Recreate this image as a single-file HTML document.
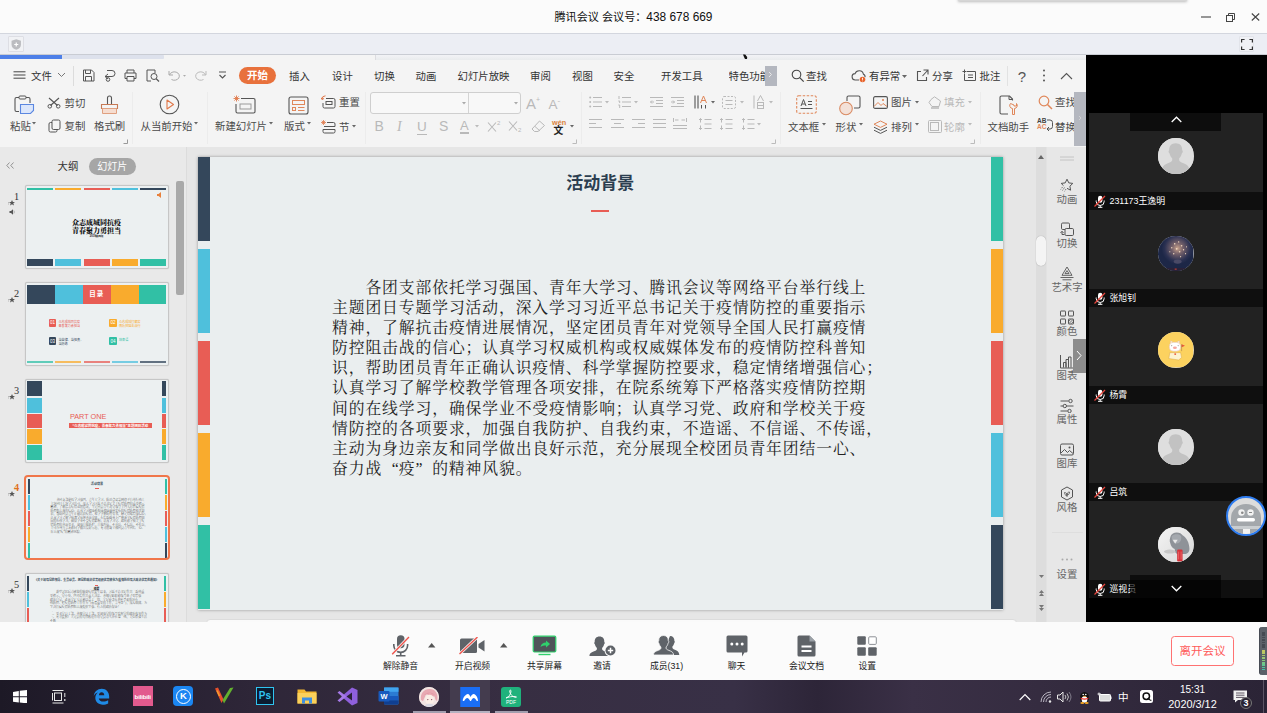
<!DOCTYPE html>
<html lang="zh-CN">
<head>
<meta charset="utf-8">
<title>腾讯会议</title>
<style>
*{box-sizing:border-box;margin:0;padding:0}
html,body{width:1267px;height:713px;overflow:hidden;background:#fafafa;font-family:"Liberation Sans","Noto Sans CJK SC",sans-serif;}
.abs{position:absolute}
#root{position:relative;width:1267px;height:713px;overflow:hidden}
#titlebar{left:0;top:0;width:1267px;height:33px;background:#fbfbfb}
#title{left:0;width:1267px;top:7.400px;text-align:center;color:#111;line-height:17px;white-space:nowrap}
#strip{left:0;top:33px;width:1267px;height:22px;background:#eceef4;border-top:1px solid #d3d6de}
#share{left:0;top:54px;width:1085.700px;height:568px;background:#f4f4f4;overflow:hidden}
#side{left:1085.700px;top:54px;width:181.300px;height:568px;background:#000}
.tile{left:3.500px;width:173.500px;height:97px;background:#222}
.tile .nb{position:absolute;left:0;bottom:0;width:173.500px;height:18.500px;background:#0f0f0f;color:#fff;font-size:8.900px;line-height:19.500px;padding-left:20.300px;white-space:nowrap}
.tile .av{position:absolute;left:69.200px;top:24.800px;margin-top:.8px;width:35.400px;height:35.400px;border-radius:50%;background:#d8d8d8;overflow:hidden}.tile .av svg{width:35.400px;height:35.400px}
#bottom{left:0;top:622px;width:1267px;height:58px;background:#fbfbfb}
#taskbar{left:0;top:680px;width:1267px;height:33px;overflow:hidden;background:linear-gradient(90deg,#1d1926 0%,#241e2e 8%,#2e2638 20%,#372e42 40%,#383046 58%,#2d2538 64.500%,#3a3046 72%,#352c40 82%,#2b2436 100%)}
/* WPS */
#menurow{left:0;top:4px;width:1086px;height:32px}
.mi{position:absolute;top:10.500px;font-size:10.4px;color:#333;line-height:16px;white-space:nowrap}
.rl{position:absolute;font-size:10.4px;color:#4a4a4a;line-height:16px;white-space:nowrap}
#leftpanel{left:0;top:93px;width:186px;height:475px;background:#e9e9e9;overflow:hidden}
#canvas{left:186px;top:93px;width:864px;height:475px;background:#e6e6e6;border-left:1px solid #dcdcdc}
#slide{left:197.500px;top:103px;width:805.500px;height:452.600px;background:#eaeeef;box-shadow:0 0 3px rgba(0,0,0,.35)}
.bar{position:absolute;width:12.500px;height:84.400px}
#body{left:134.500px;top:120.700px;font-family:"Liberation Serif","Noto Serif CJK SC",serif;font-size:15.800px;letter-spacing:.900px;line-height:20.150px;color:#222;white-space:nowrap}
#stitle{left:0;width:805.500px;top:14.600px;text-align:center;font-weight:bold;font-size:17px;color:#2c3e50;line-height:24px}
#rside{left:1050px;top:93px;width:36px;height:475px;background:#e7e7e7;box-shadow:-3.500px 0 0 #e7e7e7}
.rs{position:absolute;left:-2px;width:38px;text-align:center;font-size:10.400px;color:#666;line-height:14px;white-space:nowrap}
.bt{position:absolute;top:37px;font-size:8.800px;color:#1a1a1a;line-height:14px;text-align:center;width:80px;white-space:nowrap}
</style>
</head>
<body>
<div id="root">
<div id="titlebar" class="abs"><div id="title" class="abs"><span style="font-size:11.100px">腾讯会议 会议号：</span><span style="font-size:11.900px">438 678 669</span></div>
<div class="abs" style="left:959px;top:-4px;width:227px;height:5px;background:#d6d6d6;box-shadow:0 0 3px 1px rgba(0,0,0,.25)"></div>
<svg class="abs" style="left:1201px;top:16px" width="10" height="2" viewBox="0 0 10 2"><path d="M0 1h10" stroke="#444" stroke-width="1.100"/></svg>
<svg class="abs" style="left:1226px;top:12.500px" width="9" height="9" viewBox="0 0 9 9"><rect x="0.500" y="2.500" width="6" height="6" stroke="#444" fill="none"/><path d="M2.500 2.500v-2h6v6h-2" stroke="#444" fill="none"/></svg>
<svg class="abs" style="left:1250.500px;top:13px" width="9" height="8" viewBox="0 0 9 8"><path d="M0.800 0.500l7.400 7M8.200 0.500l-7.400 7" stroke="#444" stroke-width="1.100"/></svg>
</div>
<div id="strip" class="abs">
<div class="abs" style="left:8.200px;top:2px;width:16px;height:16px;border:1px solid #dddee4;background:#f1f2f5;border-radius:1px"></div>
<svg class="abs" style="left:11px;top:5px" width="10.500" height="11" viewBox="0 0 10 11"><path d="M5 0.300L9.700 1.800v3.700c0 2.800-2 4.500-4.700 5.300C2.300 10 .3 8.300.3 5.500V1.800z" fill="#bbbcc0"/><path d="M5 3.500v4M3 5.500h4" stroke="#fff" stroke-width="1.200"/></svg>
<div class="abs" style="left:1238.800px;top:2px;width:15.500px;height:15.500px;border:1px solid #e2e4ea;background:#f0f1f5;border-radius:1px"></div>
<svg class="abs" style="left:1241px;top:4.500px" width="12" height="11" viewBox="0 0 12 11"><path d="M0.600 3.500v-3h3M8.400 0.500h3v3M11.400 7.500v3h-3M3.600 10.500h-3v-3" stroke="#333" stroke-width="1.200" fill="none"/></svg>
</div>
<div class="abs" style="left:0;top:54px;width:1267px;height:1px;background:#c9ccd3;z-index:3"></div>
<div class="abs" style="left:0;top:55px;width:62px;height:4px;background:#4d7fe8;z-index:3"></div>
<div class="abs" style="left:62px;top:55px;width:101.500px;height:4px;background:#dde1ec;z-index:3;border-radius:0 1px 1px 0"></div>
<div class="abs" style="left:374.700px;top:55px;width:711px;height:5px;background:linear-gradient(180deg,#f2f3f6,#e9ebed);border-left:1px solid #dcdce0;z-index:3"></div>
<svg class="abs" style="left:742px;top:54px;z-index:4" width="7" height="6" viewBox="0 0 7 6"><path d="M1 0.500h2.200l2 2.500l-.2 2h-2l-1-2z" fill="#111"/></svg>
<div id="share" class="abs">
  <div id="menurow" class="abs">
<svg class="abs" style="left:13px;top:10.5px" width="13" height="12" viewBox="0 0 13 12"><path d="M0.5 2.800h12M0.5 6h12M0.5 9.200h12" stroke="#444" stroke-width="1" fill="none"/></svg>
<div class="mi" style="left:31px">文件</div>
<svg class="abs" style="left:57px;top:13.5px" width="9" height="6" viewBox="0 0 9 6"><path d="M1 1l3.5 3.5L8 1" stroke="#777" stroke-width="1" fill="none"/></svg>
<div class="abs" style="left:73px;top:8px;width:1px;height:20px;background:#dcdcdc"></div>
<svg class="abs" style="left:82px;top:10.5px" width="13" height="13" viewBox="0 0 13 13"><path d="M1.5 1h8l2.5 2.5v8.5h-10.5zM3.5 1v3.5h5V1M3.5 12V7.5h6V12" stroke="#555" stroke-width="1" fill="none"/></svg>
<svg class="abs" style="left:103px;top:10.5px" width="14" height="13" viewBox="0 0 14 13"><path d="M4 1.5h5a3 3 0 0 1 0 6H2M5 5l-3 2.5l3 2.5" stroke="#555" stroke-width="1" fill="none"/><circle cx="5" cy="10.5" r="1.8" stroke="#555" fill="none"/></svg>
<svg class="abs" style="left:124px;top:10.5px" width="13" height="13" viewBox="0 0 13 13"><path d="M3 4V1h7v3M3 9.5H1V4h11v5.5h-2M3 7.5h7V12H3z" stroke="#555" stroke-width="1" fill="none"/></svg>
<svg class="abs" style="left:146px;top:10.5px" width="14" height="13" viewBox="0 0 14 13"><path d="M5 12H1V1h8v3" stroke="#555" stroke-width="1" fill="none"/><circle cx="8" cy="7.5" r="3" stroke="#555" fill="none"/><path d="M10.2 9.8l2.8 2.7" stroke="#555" stroke-width="1.2"/></svg>
<svg class="abs" style="left:168px;top:11.5px" width="20" height="11" viewBox="0 0 20 11"><path d="M1 1v4h4M1.5 5a5 4.2 0 1 1 2 4.5" stroke="#aaa" stroke-width="1" fill="none"/><path d="M15 5h3l-1.5 1.8z" fill="#aaa"/></svg>
<svg class="abs" style="left:195px;top:11.5px" width="12" height="11" viewBox="0 0 12 11"><path d="M11 1v4H7M10.5 5a5 4.2 0 1 0 -2 4.5" stroke="#bbb" stroke-width="1" fill="none"/></svg>
<svg class="abs" style="left:218px;top:12.5px" width="9" height="9" viewBox="0 0 9 9"><path d="M1 1h7M1.5 4l3 3l3-3" stroke="#555" stroke-width="1.1" fill="none"/></svg>
<div class="abs" style="left:239px;top:9px;width:37px;height:17px;border-radius:9px;background:#e8713c;color:#fff;font-weight:bold;font-size:10.4px;line-height:17px;text-align:center">开始</div>
<div class="mi" style="left:289px">插入</div>
<div class="mi" style="left:332px">设计</div>
<div class="mi" style="left:374px">切换</div>
<div class="mi" style="left:415.5px">动画</div>
<div class="mi" style="left:457.5px">幻灯片放映</div>
<div class="mi" style="left:530px">审阅</div>
<div class="mi" style="left:572px">视图</div>
<div class="mi" style="left:613.5px">安全</div>
<div class="mi" style="left:661px">开发工具</div>
<div class="mi" style="left:728.5px;width:36px;overflow:hidden">特色功能</div>
<div class="abs" style="left:764.5px;top:7.5px;width:12px;height:20px;background:#b4b7bf"></div>
<svg class="abs" style="left:768px;top:12.5px" width="5" height="7" viewBox="0 0 5 7"><path d="M1 1l2.5 2.5L1 6" stroke="#e8e8e8" stroke-width="1" fill="none"/></svg>
<svg class="abs" style="left:791px;top:10.5px" width="14" height="14" viewBox="0 0 14 14"><circle cx="5.5" cy="5.5" r="4.3" stroke="#444" stroke-width="1.1" fill="none"/><path d="M8.7 8.7l4 4" stroke="#444" stroke-width="1.2"/></svg>
<div class="mi" style="left:806px">查找</div>
<svg class="abs" style="left:851px;top:10.5px" width="16" height="14" viewBox="0 0 16 14"><path d="M8 11H4.5a3.2 3.2 0 0 1-.4-6.4a4.3 4.3 0 0 1 8.3 0.6a2.6 2.6 0 0 1 1.6 3" stroke="#555" stroke-width="1.1" fill="none"/><circle cx="11.5" cy="10.5" r="2.8" fill="#e8652d"/><path d="M11.5 8.8v2M11.5 11.7v.6" stroke="#fff" stroke-width=".9"/></svg>
<div class="mi" style="left:869px">有异常</div>
<svg class="abs" style="left:902px;top:16.5px" width="5" height="3" viewBox="0 0 5 3"><path d="M0 0h5L2.5 3z" fill="#666"/></svg>
<svg class="abs" style="left:916px;top:10.5px" width="13" height="13" viewBox="0 0 13 13"><path d="M5 2.5H1.5v9h9V8M7.5 1h4.5v4.5M12 1L6.5 7" stroke="#555" stroke-width="1.1" fill="none"/></svg>
<div class="mi" style="left:932px">分享</div>
<svg class="abs" style="left:962px;top:10.5px" width="15" height="13" viewBox="0 0 15 13"><path d="M5 2.5h8.5v9H2.5V5M0.5 2.5h4M2.5 0.5v4M6 6h5M6 8.5h5" stroke="#555" stroke-width="1" fill="none"/></svg>
<div class="mi" style="left:979.5px">批注</div>
<div class="abs" style="left:1007px;top:8px;width:1px;height:20px;background:#e2e2e2"></div>
<div class="abs" style="left:1016px;top:10px;width:12px;text-align:center;font-size:15px;line-height:18px;color:#555">?</div>
<svg class="abs" style="left:1042px;top:10.5px" width="4" height="13" viewBox="0 0 4 13"><circle cx="2" cy="1.5" r="1" fill="#555"/><circle cx="2" cy="6.5" r="1" fill="#555"/><circle cx="2" cy="11.5" r="1" fill="#555"/></svg>
<svg class="abs" style="left:1060px;top:13.5px" width="13" height="8" viewBox="0 0 13 8"><path d="M1 7l5.5-5.5L12 7" stroke="#555" stroke-width="1.1" fill="none"/></svg>
</div>
  <!--RB1-->
<svg class="abs" style="left:14px;top:41px" width="21" height="20" viewBox="0 0 21 20"><path d="M5 2.5H2.5a1.5 1.5 0 0 0-1.500 1.500v11a1.500 1.500 0 0 0 1.500 1.500H5M12 2.500h2.500a1.500 1.500 0 0 1 1.500 1.500V8" stroke="#555" stroke-width="1.100" fill="none"/><rect x="5" y="1" width="7" height="3" rx="1" stroke="#555" stroke-width="1" fill="#f4f4f4"/><path d="M6.500 9.500h13v6l-3 3h-10z" fill="#dbe6fb" stroke="#5b87e0" stroke-width="1.100"/></svg>
<div class="rl" style="left:10px;top:65.200px">粘贴</div>
<svg class="abs" style="left:32px;top:68px" width="4" height="3" viewBox="0 0 4 3"><path d="M0 0h4L2 2.500z" fill="#666"/></svg>
<svg class="abs" style="left:47px;top:43px" width="14" height="12" viewBox="0 0 14 12"><path d="M2 1l8.500 7.500M12 1L3.500 8.500" stroke="#555" stroke-width="1.100" fill="none"/><circle cx="2.800" cy="9.300" r="1.800" stroke="#555" fill="none"/><circle cx="11.200" cy="9.300" r="1.800" stroke="#555" fill="none"/></svg>
<div class="rl" style="left:64.5px;top:41.5px">剪切</div>
<svg class="abs" style="left:48px;top:65px" width="13" height="14" viewBox="0 0 13 14"><rect x="4" y="1" width="8" height="9.500" rx="1.500" stroke="#555" fill="none"/><path d="M4 3.500H2.500a1.500 1.500 0 0 0-1.500 1.500v6.500a1.500 1.500 0 0 0 1.500 1.500h5a1.500 1.500 0 0 0 1.500-1.500V10.500" stroke="#555" fill="none"/></svg>
<div class="rl" style="left:64.5px;top:65.200px">复制</div>
<svg class="abs" style="left:100px;top:41px" width="19" height="20" viewBox="0 0 19 20"><path d="M7.500 9V3a2 2 0 0 1 4 0v6" stroke="#555" stroke-width="1.100" fill="none"/><path d="M1.500 9.500h16v4h-16z" stroke="#c77a55" stroke-width="1.100" fill="none"/><path d="M2.500 13.500h14v5h-14z" stroke="#e0a080" stroke-width="1" fill="#f6ddd0"/></svg>
<div class="rl" style="left:94px;top:65.200px">格式刷</div>
<svg class="abs" style="left:123px;top:85px" width="5" height="5" viewBox="0 0 5 5"><path d="M4.500 0.500v4h-4" stroke="#999" fill="none"/></svg>
<div class="abs" style="left:132px;top:38px;width:1px;height:52px;background:#ececec"></div>
<svg class="abs" style="left:159px;top:39.5px" width="21" height="21" viewBox="0 0 21 21"><circle cx="10.500" cy="10.500" r="9.300" stroke="#555" stroke-width="1.100" fill="none"/><path d="M8 6l6.500 4.500L8 15z" stroke="#e0784a" stroke-width="1.100" fill="none" stroke-linejoin="round"/></svg>
<div class="rl" style="left:140.500px;top:65.200px">从当前开始</div>
<svg class="abs" style="left:194px;top:68px" width="4" height="3" viewBox="0 0 4 3"><path d="M0 0h4L2 2.500z" fill="#666"/></svg>
<div class="abs" style="left:207px;top:38px;width:1px;height:52px;background:#ececec"></div>
<svg class="abs" style="left:233px;top:41px" width="23" height="20" viewBox="0 0 23 20"><path d="M8 3.500h12.500a1.500 1.500 0 0 1 1.500 1.500v11.500a1.500 1.500 0 0 1-1.500 1.500h-16a1.500 1.500 0 0 1-1.500-1.500V9" stroke="#555" stroke-width="1.100" fill="none"/><rect x="7" y="9" width="11" height="5" stroke="#999" fill="none"/><path d="M3.500 0.500v6M0.500 3.500h6M1.400 1.400l4.200 4.200M5.600 1.400L1.400 5.600" stroke="#e0784a" stroke-width=".9"/></svg>
<div class="rl" style="left:215px;top:65.200px">新建幻灯片</div>
<svg class="abs" style="left:269px;top:68px" width="4" height="3" viewBox="0 0 4 3"><path d="M0 0h4L2 2.500z" fill="#666"/></svg>
<svg class="abs" style="left:287.500px;top:41.5px" width="21" height="19" viewBox="0 0 21 19"><rect x="1" y="1" width="19" height="17" rx="2" stroke="#555" stroke-width="1.100" fill="none"/><rect x="4.500" y="4.500" width="12" height="4" stroke="#e0875a" fill="none"/><rect x="4.500" y="11.500" width="3" height="3" stroke="#e0875a" fill="none"/><path d="M10 11.500h6.500M10 14.500h6.500" stroke="#e0875a"/></svg>
<div class="rl" style="left:284px;top:65.200px">版式</div>
<svg class="abs" style="left:307px;top:68px" width="4" height="3" viewBox="0 0 4 3"><path d="M0 0h4L2 2.500z" fill="#666"/></svg>
<svg class="abs" style="left:321px;top:41px" width="15" height="14" viewBox="0 0 15 14"><path d="M5 3.500h7.500a1.500 1.500 0 0 1 1.500 1.500v6.500a1.500 1.500 0 0 1-1.500 1.500h-9a1.500 1.500 0 0 1-1.500-1.500V8" stroke="#555" fill="none"/><rect x="5" y="6.500" width="6" height="3" stroke="#555" fill="none"/><path d="M4.500 0.800a3.500 3.500 0 0 0-3.500 3.500M0 2.500l1 2l2-1" stroke="#e0784a" fill="none"/></svg>
<div class="rl" style="left:339px;top:41px">重置</div>
<svg class="abs" style="left:321px;top:65.5px" width="15" height="14" viewBox="0 0 15 14"><path d="M6 2.500h6.500a1.500 1.500 0 0 1 1.500 1.500v2.500H3M14 9.500v2a1.500 1.500 0 0 1-1.500 1.500h-9a1.500 1.500 0 0 1-1.500-1.500v-2h12" stroke="#555" fill="none"/><path d="M2.500 0v5M0 2.500h5M.8.800l3.400 3.400M4.200.8L.8 4.200" stroke="#e0784a" stroke-width=".8"/></svg>
<div class="rl" style="left:339px;top:65.500px">节</div>
<svg class="abs" style="left:352px;top:71px" width="4" height="3" viewBox="0 0 4 3"><path d="M0 0h4L2 2.500z" fill="#666"/></svg>
<div class="abs" style="left:365px;top:38px;width:1px;height:52px;background:#ececec"></div>
<div class="abs" style="left:370px;top:38px;width:151px;height:21.500px;background:#f8f8f8;border:1px solid #cfcfcf;border-radius:3px"></div>
<div class="abs" style="left:468px;top:38.5px;width:1px;height:20.500px;background:#d4d4d4"></div>
<svg class="abs" style="left:462px;top:47.5px" width="4" height="3" viewBox="0 0 4 3"><path d="M0 0h4L2 2.500z" fill="#aaa"/></svg>
<svg class="abs" style="left:513.500px;top:47.5px" width="4" height="3" viewBox="0 0 4 3"><path d="M0 0h4L2 2.500z" fill="#aaa"/></svg>
<div class="abs" style="left:526px;top:36.5px;font-size:15px;line-height:18px;color:#b9b9b9">A<span style="font-size:7px;vertical-align:7px">+</span></div>
<div class="abs" style="left:548.500px;top:37.5px;font-size:13.500px;line-height:18px;color:#b9b9b9">A<span style="font-size:8px;vertical-align:6px">‑</span></div>
<div class="abs" style="left:374.500px;top:64px;font-size:14px;line-height:17px;color:#b9b9b9">B</div>
<div class="abs" style="left:397px;top:64px;font-size:14px;line-height:17px;color:#b9b9b9;font-style:italic;font-family:'Liberation Serif',serif">I</div>
<div class="abs" style="left:417px;top:63.5px;font-size:13.500px;line-height:17px;color:#b9b9b9;border-bottom:1px solid #b9b9b9;height:17.500px">U</div>
<div class="abs" style="left:439px;top:64px;font-size:14px;line-height:17px;color:#b9b9b9">S</div>
<div class="abs" style="left:460px;top:63.5px;font-size:13px;line-height:15px;color:#b9b9b9;border-bottom:2px solid #b9b9b9;height:16.500px">A</div>
<svg class="abs" style="left:475px;top:71px" width="4" height="3" viewBox="0 0 4 3"><path d="M0 0h4L2 2.500z" fill="#bbb"/></svg>
<svg class="abs" style="left:486.5px;top:65px" width="15" height="14" viewBox="0 0 15 14"><path d="M1 3.500l8 9M9 3.500l-8 9" stroke="#b9b9b9" stroke-width="1.100"/><text x="10" y="6" font-size="6" fill="#b9b9b9" font-family="Liberation Sans,sans-serif">2</text></svg>
<svg class="abs" style="left:508px;top:65px" width="15" height="14" viewBox="0 0 15 14"><path d="M1 2.500l8 9M9 2.500l-8 9" stroke="#b9b9b9" stroke-width="1.100"/><text x="10" y="13" font-size="6" fill="#b9b9b9" font-family="Liberation Sans,sans-serif">2</text></svg>
<svg class="abs" style="left:531px;top:66px" width="15" height="13" viewBox="0 0 15 13"><path d="M8.500 1l5 4.500l-6.500 6h-3.500l-2.500-2.500zM4 6.500l5 4.500" stroke="#b9b9b9" fill="none"/></svg>
<div class="abs" style="left:552px;top:64.5px;width:14px;text-align:center;font-size:7.300px;line-height:7px;color:#d9823c;font-weight:bold">wén</div>
<div class="abs" style="left:553.5px;top:70.5px;font-size:9.800px;line-height:11px;color:#222;font-weight:bold">文</div>
<svg class="abs" style="left:569.500px;top:71px" width="4" height="3" viewBox="0 0 4 3"><path d="M0 0h4L2 2.500z" fill="#666"/></svg>
<svg class="abs" style="left:572px;top:85px" width="5" height="5" viewBox="0 0 5 5"><path d="M4.500 0.500v4h-4" stroke="#bbb" fill="none"/></svg>
<div class="abs" style="left:581px;top:38px;width:1px;height:52px;background:#ececec"></div>
<!--/RB1-->
<!--RB2-->
<svg class="abs" style="left:589px;top:42px" width="13" height="12" viewBox="0 0 13 12"><path d="M4 1.500h9M4 6h9M4 10.500h9" stroke="#b9b9b9"/><circle cx="1.200" cy="1.500" r="1" fill="#b9b9b9"/><circle cx="1.200" cy="6" r="1" fill="#b9b9b9"/><circle cx="1.200" cy="10.500" r="1" fill="#b9b9b9"/></svg>
<svg class="abs" style="left:605px;top:47px" width="4" height="3" viewBox="0 0 4 3"><path d="M0 0h4L2 2.500z" fill="#bbb"/></svg>
<svg class="abs" style="left:617.500px;top:42px" width="13" height="12" viewBox="0 0 13 12"><path d="M4 1.500h9M4 6h9M4 10.500h9M1 0v3M0.300 5h1.400v2M0.300 9h1.400v3" stroke="#b9b9b9" fill="none"/></svg>
<svg class="abs" style="left:634px;top:47px" width="4" height="3" viewBox="0 0 4 3"><path d="M0 0h4L2 2.500z" fill="#bbb"/></svg>
<svg class="abs" style="left:649.500px;top:42px" width="13" height="12" viewBox="0 0 13 12"><path d="M0 1.500h13M6 4.500h7M6 7.500h7M0 10.500h13M4 6H0.500M2 4.500L0.500 6L2 7.500" stroke="#b9b9b9" fill="none"/></svg>
<svg class="abs" style="left:670.500px;top:42px" width="13" height="12" viewBox="0 0 13 12"><path d="M0 1.500h13M6 4.500h7M6 7.500h7M0 10.500h13M0 6h3.500M2 4.500L3.500 6L2 7.500" stroke="#b9b9b9" fill="none"/></svg>
<svg class="abs" style="left:693.500px;top:40.5px" width="14" height="14" viewBox="0 0 14 14"><path d="M1 0.500v13M4 0.500v13" stroke="#555" stroke-width="1.100"/><path d="M6.500 8l3-7l3 7M7.500 5.500h4" stroke="#e0875a" fill="none"/><path d="M7.500 10v3.500M11.500 10v3.500" stroke="#555"/></svg>
<svg class="abs" style="left:711px;top:47px" width="4" height="3" viewBox="0 0 4 3"><path d="M0 0h4L2 2.500z" fill="#666"/></svg>
<svg class="abs" style="left:722px;top:41.5px" width="14" height="13" viewBox="0 0 14 13"><rect x="0.500" y="0.500" width="13" height="12" rx="1.500" stroke="#b9b9b9" stroke-dasharray="2 1.500" fill="none"/><path d="M3.500 4.500h7M3.500 8.500h7" stroke="#b9b9b9"/></svg>
<svg class="abs" style="left:740px;top:47px" width="4" height="3" viewBox="0 0 4 3"><path d="M0 0h4L2 2.500z" fill="#bbb"/></svg>
<svg class="abs" style="left:753px;top:40.5px" width="14" height="14" viewBox="0 0 14 14"><path d="M1 0.500v13" stroke="#b9b9b9"/><path d="M4.500 6l3-5.500l3 5.500" stroke="#b9b9b9" fill="none"/><rect x="4.500" y="7.500" width="6" height="6" stroke="#b9b9b9" fill="none"/><path d="M4.500 10.500h6" stroke="#b9b9b9"/></svg>
<svg class="abs" style="left:769px;top:47px" width="4" height="3" viewBox="0 0 4 3"><path d="M0 0h4L2 2.500z" fill="#bbb"/></svg>
<svg class="abs" style="left:589px;top:64px" width="13" height="12" viewBox="0 0 13 12"><path d="M0 1.5h13M0 5.5h7M0 9.5h13" stroke="#b9b9b9" stroke-width="1" fill="none"/></svg>
<svg class="abs" style="left:610.5px;top:64px" width="13" height="12" viewBox="0 0 13 12"><path d="M0 1.5h13M3 5.5h7M0 9.5h13" stroke="#b9b9b9" stroke-width="1" fill="none"/></svg>
<svg class="abs" style="left:632px;top:64px" width="13" height="12" viewBox="0 0 13 12"><path d="M0 1.5h13M6 5.5h7M0 9.5h13" stroke="#b9b9b9" stroke-width="1" fill="none"/></svg>
<svg class="abs" style="left:653px;top:64px" width="13" height="12" viewBox="0 0 13 12"><path d="M0 1.5h13M0 5.5h13M0 9.5h13" stroke="#b9b9b9" stroke-width="1" fill="none"/></svg>
<svg class="abs" style="left:673px;top:63px" width="14" height="13" viewBox="0 0 14 13"><path d="M0 8.500h14M0 11.500h14M0.500 1v4M13.500 1v4M2 3h3.500M8.500 3h3.500" stroke="#b9b9b9" fill="none"/></svg>
<svg class="abs" style="left:697.5px;top:63.5px" width="14" height="12" viewBox="0 0 14 12"><path d="M6.500 1.500h7M6.500 6h7M6.500 10.500h7M2.500 0.500v4M1 2l1.500-1.500L4 2M2.500 7.500v4M1 10l1.500 1.500L4 10" stroke="#b9b9b9" fill="none"/></svg>
<svg class="abs" style="left:719px;top:63.5px" width="14" height="12" viewBox="0 0 14 12"><path d="M6.500 1.500h7M6.500 6h7M6.500 10.500h7M2.500 0.500v4M1 2l1.500-1.500L4 2M2.500 7.500v4M1 10l1.500 1.500L4 10" stroke="#b9b9b9" fill="none"/></svg>
<svg class="abs" style="left:740.5px;top:63.5px" width="14" height="12" viewBox="0 0 14 12"><path d="M6.500 1.500h7M6.500 6h7M6.500 10.500h7M2.500 0.500v4M1 2l1.500-1.500L4 2M2.500 7.500v4M1 10l1.500 1.500L4 10" stroke="#b9b9b9" fill="none"/></svg>
<svg class="abs" style="left:757px;top:69px" width="4" height="3" viewBox="0 0 4 3"><path d="M0 0h4L2 2.500z" fill="#bbb"/></svg>
<svg class="abs" style="left:771px;top:85px" width="5" height="5" viewBox="0 0 5 5"><path d="M4.500 0.500v4h-4" stroke="#bbb" fill="none"/></svg>
<div class="abs" style="left:779.500px;top:38px;width:1px;height:52px;background:#ececec"></div>
<svg class="abs" style="left:796px;top:41px" width="21" height="19" viewBox="0 0 21 19"><rect x="0.700" y="0.700" width="19.600" height="17.600" rx="2" stroke="#e0875a" stroke-width="1.100" stroke-dasharray="2.500 1.500" fill="none"/><path d="M5 11l2.500-6.500l2.500 6.500M6 9h3" stroke="#555" fill="none"/><path d="M4.500 13.500h12M12 6.500h4M12 9.500h4" stroke="#555"/></svg>
<div class="rl" style="left:788px;top:65.500px">文本框</div>
<svg class="abs" style="left:821.5px;top:69px" width="4" height="3" viewBox="0 0 4 3"><path d="M0 0h4L2 2.500z" fill="#666"/></svg>
<svg class="abs" style="left:839px;top:40.5px" width="22" height="21" viewBox="0 0 22 21"><path d="M8 6V2.500a1.500 1.500 0 0 1 1.500-1.500h10a1.500 1.500 0 0 1 1.500 1.500v9a1.500 1.500 0 0 1-1.500 1.500H15" stroke="#555" stroke-width="1.100" fill="none"/><circle cx="7" cy="13.500" r="6.300" stroke="#d98a62" stroke-width="1.100" fill="#f3e1d8"/></svg>
<div class="rl" style="left:835.500px;top:65.500px">形状</div>
<svg class="abs" style="left:859px;top:69px" width="4" height="3" viewBox="0 0 4 3"><path d="M0 0h4L2 2.500z" fill="#666"/></svg>
<svg class="abs" style="left:873px;top:42px" width="15" height="13" viewBox="0 0 15 13"><rect x="0.600" y="0.600" width="13.800" height="11.800" rx="1.500" stroke="#555" stroke-width="1.100" fill="none"/><path d="M1 10.500l4-4l3 3l2-2l4 3" stroke="#e0875a" fill="none"/><circle cx="10" cy="4" r="1.100" fill="#e0875a"/></svg>
<div class="rl" style="left:891px;top:41px">图片</div>
<svg class="abs" style="left:915px;top:47px" width="4" height="3" viewBox="0 0 4 3"><path d="M0 0h4L2 2.500z" fill="#666"/></svg>
<svg class="abs" style="left:873px;top:65.5px" width="15" height="14" viewBox="0 0 15 14"><path d="M7.500 1L1 4.200l6.500 3.200L14 4.200z" stroke="#e0875a" fill="none"/><path d="M1 7.200l6.500 3.200L14 7.200M1 10.200l6.500 3.200L14 10.200" stroke="#555" fill="none"/></svg>
<div class="rl" style="left:891px;top:65.500px">排列</div>
<svg class="abs" style="left:915px;top:69px" width="4" height="3" viewBox="0 0 4 3"><path d="M0 0h4L2 2.500z" fill="#666"/></svg>
<svg class="abs" style="left:927.500px;top:42px" width="14" height="13" viewBox="0 0 14 13"><path d="M3 3.500L6.500 0.800l6 4.200l-1.500 5.500h-7L1 6.500z" stroke="#b9b9b9" fill="none"/><path d="M3 12h8" stroke="#b9b9b9" stroke-width="1.500"/></svg>
<div class="rl" style="left:944px;top:41px;color:#b9b9b9">填充</div>
<svg class="abs" style="left:968px;top:47px" width="4" height="3" viewBox="0 0 4 3"><path d="M0 0h4L2 2.500z" fill="#bbb"/></svg>
<svg class="abs" style="left:927.500px;top:66px" width="14" height="13" viewBox="0 0 14 13"><rect x="0.500" y="0.500" width="13" height="12" rx="1" stroke="#b9b9b9" fill="none"/><rect x="2.500" y="2.500" width="8" height="8" stroke="#b9b9b9" fill="none"/></svg>
<div class="rl" style="left:944px;top:65.500px;color:#b9b9b9">轮廓</div>
<svg class="abs" style="left:968px;top:69px" width="4" height="3" viewBox="0 0 4 3"><path d="M0 0h4L2 2.500z" fill="#bbb"/></svg>
<svg class="abs" style="left:970px;top:85px" width="5" height="5" viewBox="0 0 5 5"><path d="M4.500 0.500v4h-4" stroke="#bbb" fill="none"/></svg>
<div class="abs" style="left:979.500px;top:38px;width:1px;height:52px;background:#ececec"></div>
<svg class="abs" style="left:999px;top:41px" width="19" height="21" viewBox="0 0 19 21"><path d="M13.500 5.500V4l-3-3h-8a1.500 1.500 0 0 0-1.500 1.500v15a1.500 1.500 0 0 0 1.500 1.500H9" stroke="#555" stroke-width="1.100" fill="none"/><path d="M10 1v3.500h3.500" stroke="#555" fill="none"/><path d="M11.500 8.500a3 3 0 0 0 2 5v6h2v-6a3 3 0 0 0 2-5v2.500h-2.500v-1z" stroke="#e0875a" stroke-width="1" fill="none" stroke-linejoin="round"/></svg>
<div class="rl" style="left:987.500px;top:65.500px">文档助手</div>
<svg class="abs" style="left:1037.500px;top:41px" width="15" height="15" viewBox="0 0 15 15"><circle cx="6" cy="6" r="4.800" stroke="#e0875a" stroke-width="1.200" fill="none"/><path d="M9.500 9.500l4.500 4.500" stroke="#e0875a" stroke-width="1.500"/></svg>
<div class="rl" style="left:1055px;top:41px;width:19px;overflow:hidden">查找</div>
<div class="abs" style="left:1037px;top:63.5px;font-size:6.500px;line-height:6.500px;color:#444;font-weight:bold">AB<br><span style="color:#e0875a">AC</span></div>
<svg class="abs" style="left:1046px;top:65px" width="7" height="12" viewBox="0 0 7 12"><path d="M1 1h3a2.500 2.500 0 0 1 2.500 2.500v4a2.500 2.500 0 0 1-2.500 2.500H1M3 8L1 10l2 2" stroke="#555" fill="none"/></svg>
<div class="rl" style="left:1055px;top:65.500px;width:19px;overflow:hidden">替换</div>
<div class="abs" style="left:1074px;top:37.5px;width:12px;height:54.500px;background:#b4b7bf"></div>
<svg class="abs" style="left:1078px;top:61px" width="4" height="6" viewBox="0 0 4 6"><path d="M1 1l2 2L1 5" stroke="#d8d8d8" stroke-width=".8" fill="none"/></svg>
<!--/RB2-->
<div id="leftpanel" class="abs">
<svg class="abs" style="left:6px;top:15px" width="8" height="7" viewBox="0 0 8 7"><path d="M3.500 0.500L0.800 3.500l2.700 3M7.500 0.500L4.800 3.500l2.700 3" stroke="#888" stroke-width=".9" fill="none"/></svg>
<div class="abs" style="left:57.500px;top:12px;font-size:10.400px;line-height:15px;color:#333">大纲</div>
<div class="abs" style="left:88.800px;top:10.7px;width:47px;height:17px;border-radius:8.500px;background:#a6a6a6;color:#fff;font-size:10px;line-height:17px;text-align:center">幻灯片</div>
<div class="abs" style="left:176.300px;top:34.4px;width:7.500px;height:114px;background:#a9a9a9;border-radius:2px"></div>
<div class="abs" style="left:12.500px;top:42.7px;width:8px;text-align:center;font-family:'Liberation Serif',serif;font-size:10.300px;line-height:13px;color:#333;font-weight:normal">1</div>
<svg class="abs" style="left:8px;top:53.2px" width="7" height="6" viewBox="0 0 7 6"><path d="M4 0l.9 2h2.100L5.300 3.300l.7 2.200L4 4.200L2 5.500l.7-2.200L1 2h2.100z" fill="#555"/><path d="M0 2.500h1.200M0 4h1" stroke="#999" stroke-width=".6"/></svg>
<div class="abs" style="left:12.500px;top:139.8px;width:8px;text-align:center;font-family:'Liberation Serif',serif;font-size:10.300px;line-height:13px;color:#333;font-weight:normal">2</div>
<svg class="abs" style="left:8px;top:150.3px" width="7" height="6" viewBox="0 0 7 6"><path d="M4 0l.9 2h2.100L5.300 3.300l.7 2.200L4 4.200L2 5.500l.7-2.200L1 2h2.100z" fill="#555"/><path d="M0 2.500h1.200M0 4h1" stroke="#999" stroke-width=".6"/></svg>
<div class="abs" style="left:12.500px;top:236.6px;width:8px;text-align:center;font-family:'Liberation Serif',serif;font-size:10.300px;line-height:13px;color:#333;font-weight:normal">3</div>
<svg class="abs" style="left:8px;top:247.1px" width="7" height="6" viewBox="0 0 7 6"><path d="M4 0l.9 2h2.100L5.300 3.300l.7 2.200L4 4.200L2 5.500l.7-2.200L1 2h2.100z" fill="#555"/><path d="M0 2.500h1.200M0 4h1" stroke="#999" stroke-width=".6"/></svg>
<div class="abs" style="left:12.500px;top:333.8px;width:8px;text-align:center;font-family:'Liberation Serif',serif;font-size:10.300px;line-height:13px;color:#e0701c;font-weight:bold">4</div>
<svg class="abs" style="left:8px;top:344.3px" width="7" height="6" viewBox="0 0 7 6"><path d="M4 0l.9 2h2.100L5.300 3.300l.7 2.200L4 4.200L2 5.500l.7-2.200L1 2h2.100z" fill="#555"/><path d="M0 2.500h1.200M0 4h1" stroke="#999" stroke-width=".6"/></svg>
<div class="abs" style="left:12.500px;top:430.8px;width:8px;text-align:center;font-family:'Liberation Serif',serif;font-size:10.300px;line-height:13px;color:#333;font-weight:normal">5</div>
<svg class="abs" style="left:8px;top:441.3px" width="7" height="6" viewBox="0 0 7 6"><path d="M4 0l.9 2h2.100L5.300 3.300l.7 2.200L4 4.200L2 5.500l.7-2.200L1 2h2.100z" fill="#555"/><path d="M0 2.500h1.200M0 4h1" stroke="#999" stroke-width=".6"/></svg>
<svg class="abs" style="left:8.500px;top:61.5px" width="6" height="6" viewBox="0 0 6 6"><path d="M0.500 2h1.500l2-1.800v5.600l-2-1.800H0.500z" fill="#555"/><path d="M4.800 1.500a2.500 2.500 0 0 1 0 3" stroke="#888" stroke-width=".6" fill="none"/></svg>
<div class="abs" style="left:24.600px;top:38.2px;width:144px;height:84px;border:1px solid #c6c6c6;border-radius:2px;background:#ecf0f1;overflow:hidden;box-shadow:0 0 1px rgba(0,0,0,.2)"><div style="position:absolute;left:-1px;top:-1px;width:144px;height:83px"><div style="position:absolute;left:2.4px;top:2.5px;width:26.3px;height:2.2px;background:#31c0a5;"></div><div style="position:absolute;left:30.4px;top:2.5px;width:26.3px;height:2.2px;background:#f9ab2d;"></div><div style="position:absolute;left:59.3px;top:2.5px;width:26.3px;height:2.2px;background:#e85d55;"></div><div style="position:absolute;left:87.4px;top:2.5px;width:26.3px;height:2.2px;background:#4fc0dc;"></div><div style="position:absolute;left:115.4px;top:2.5px;width:26.3px;height:2.2px;background:#34475b;"></div><div style="position:absolute;left:2.4px;top:73.7px;width:26.3px;height:7.1px;background:#34475b;"></div><div style="position:absolute;left:30.4px;top:73.7px;width:26.3px;height:7.1px;background:#4fc0dc;"></div><div style="position:absolute;left:59.3px;top:73.7px;width:26.3px;height:7.1px;background:#e85d55;"></div><div style="position:absolute;left:87.4px;top:73.7px;width:26.3px;height:7.1px;background:#f9ab2d;"></div><div style="position:absolute;left:115.4px;top:73.7px;width:26.3px;height:7.1px;background:#31c0a5;"></div><div style="position:absolute;left:0;top:33.500px;width:144px;text-align:center;font-family:'Liberation Serif','Noto Serif CJK SC',serif;font-weight:900;font-size:7px;line-height:8.200px;color:#111">众志成城同抗疫<br>青春聚力勇担当</div><div style="position:absolute;left:0;top:50px;width:144px;text-align:center;font-weight:bold;font-size:2.600px;line-height:3px;color:#111">2019级四班</div><svg style="position:absolute;left:132px;top:7px" width="5" height="6" viewBox="0 0 5 6"><path d="M0 2h1.500L4 0v6L1.500 4H0z" fill="#e8813c"/></svg></div></div>
<div class="abs" style="left:24.600px;top:135.3px;width:144px;height:84px;border:1px solid #c6c6c6;border-radius:2px;background:#ecf0f1;overflow:hidden;box-shadow:0 0 1px rgba(0,0,0,.2)"><div style="position:absolute;left:-1px;top:-1px;width:144px;height:83px"><div style="position:absolute;left:2.4px;top:2.4px;width:28px;height:19.5px;background:#34475b;"></div><div style="position:absolute;left:30.4px;top:2.4px;width:28px;height:19.5px;background:#4fc0dc;"></div><div style="position:absolute;left:58.4px;top:2.4px;width:27.7px;height:19.5px;background:#e85d55;"></div><div style="position:absolute;left:86.1px;top:2.4px;width:27.9px;height:19.5px;background:#f9ab2d;"></div><div style="position:absolute;left:114px;top:2.4px;width:27.7px;height:19.5px;background:#31c0a5;"></div><div style="position:absolute;left:58.400px;top:6.500px;width:27.700px;text-align:center;color:#fff;font-weight:bold;font-size:6.500px;line-height:9px;letter-spacing:1px">目录</div><div style="position:absolute;left:24.1px;top:36.5px;width:7.5px;height:8px;background:#e85d55;border-radius:1px"></div><div style="position:absolute;left:24.1px;top:38.0px;width:7.500px;text-align:center;color:#fff;font-size:4.500px;line-height:5px">01</div><div style="position:absolute;left:33.900000000000006px;top:37.3px;color:#e85d55;font-size:3.100px;line-height:4px;white-space:nowrap">众志成城同抗疫<br>青春聚力勇担当</div><div style="position:absolute;left:84.6px;top:36.5px;width:7.5px;height:8px;background:#f9ab2d;border-radius:1px"></div><div style="position:absolute;left:84.6px;top:38.0px;width:7.500px;text-align:center;color:#fff;font-size:4.500px;line-height:5px">02</div><div style="position:absolute;left:94.39999999999999px;top:37.3px;color:#f9ab2d;font-size:3.100px;line-height:4px;white-space:nowrap">众志成城打赢疫<br>情防控阻击战行</div><div style="position:absolute;left:24.1px;top:55.1px;width:7.5px;height:8px;background:#34475b;border-radius:1px"></div><div style="position:absolute;left:24.1px;top:56.6px;width:7.500px;text-align:center;color:#fff;font-size:4.500px;line-height:5px">03</div><div style="position:absolute;left:33.900000000000006px;top:55.9px;color:#34475b;font-size:3.100px;line-height:4px;white-space:nowrap">当自律、当担责、<br>当历练</div><div style="position:absolute;left:84.6px;top:55.1px;width:7.5px;height:8px;background:#31c0a5;border-radius:1px"></div><div style="position:absolute;left:84.6px;top:56.6px;width:7.500px;text-align:center;color:#fff;font-size:4.500px;line-height:5px">04</div><div style="position:absolute;left:94.39999999999999px;top:55.9px;color:#31c0a5;font-size:3.100px;line-height:4px;white-space:nowrap">结束语</div><div style="position:absolute;left:2.4px;top:78.7px;width:26.3px;height:1.9px;background:#31c0a5;opacity:.75"></div><div style="position:absolute;left:30.4px;top:78.7px;width:26.3px;height:1.9px;background:#f9ab2d;opacity:.75"></div><div style="position:absolute;left:59.3px;top:78.7px;width:26.3px;height:1.9px;background:#e85d55;opacity:.75"></div><div style="position:absolute;left:87.4px;top:78.7px;width:26.3px;height:1.9px;background:#4fc0dc;opacity:.75"></div><div style="position:absolute;left:115.4px;top:78.7px;width:26.3px;height:1.9px;background:#34475b;opacity:.75"></div></div></div>
<div class="abs" style="left:24.600px;top:232.1px;width:144px;height:84px;border:1px solid #c6c6c6;border-radius:2px;background:#ecf0f1;overflow:hidden;box-shadow:0 0 1px rgba(0,0,0,.2)"><div style="position:absolute;left:-1px;top:-1px;width:144px;height:83px"><div style="position:absolute;left:2.4px;top:2.4px;width:15px;height:14.9px;background:#34475b;"></div><div style="position:absolute;left:137.4px;top:2.4px;width:4.3px;height:14.9px;background:#34475b;"></div><div style="position:absolute;left:2.4px;top:18.7px;width:15px;height:14.9px;background:#4fc0dc;"></div><div style="position:absolute;left:137.4px;top:18.7px;width:4.3px;height:14.9px;background:#4fc0dc;"></div><div style="position:absolute;left:2.4px;top:34.5px;width:15px;height:14.9px;background:#e85d55;"></div><div style="position:absolute;left:137.4px;top:34.5px;width:4.3px;height:14.9px;background:#e85d55;"></div><div style="position:absolute;left:2.4px;top:49.8px;width:15px;height:14.9px;background:#f9ab2d;"></div><div style="position:absolute;left:137.4px;top:49.8px;width:4.3px;height:14.9px;background:#f9ab2d;"></div><div style="position:absolute;left:2.4px;top:66px;width:15px;height:14.9px;background:#31c0a5;"></div><div style="position:absolute;left:137.4px;top:66px;width:4.3px;height:14.9px;background:#31c0a5;"></div><div style="position:absolute;left:45.300px;top:33px;color:#e85d55;font-size:7.300px;line-height:10px;white-space:nowrap">PART ONE</div><div style="position:absolute;left:44.400px;top:43.800px;width:82.700px;height:5.500px;background:#e85d55;color:#fff;font-size:3.450px;line-height:6.700px;text-align:center;white-space:nowrap;font-weight:bold;overflow:hidden">“众志成城同抗疫，青春聚力勇担当”主题团日活动</div></div></div>
<div class="abs" style="left:23.700px;top:328.1px;width:146px;height:85.2px;border:2px solid #f0764a;border-radius:4px;background:#ecf0f1;overflow:hidden"><div style="position:absolute;left:-0.700px;top:-0.200px;width:144px;height:83px"><div style="position:absolute;left:2.8px;top:2.4px;width:2px;height:15px;background:#34475b;"></div><div style="position:absolute;left:2.8px;top:18.4px;width:2px;height:15px;background:#4fc0dc;"></div><div style="position:absolute;left:2.8px;top:34.3px;width:2px;height:15px;background:#e85d55;"></div><div style="position:absolute;left:2.8px;top:49.8px;width:2px;height:15px;background:#f9ab2d;"></div><div style="position:absolute;left:2.8px;top:65.7px;width:2px;height:15px;background:#31c0a5;"></div><div style="position:absolute;left:140px;top:2.4px;width:2px;height:15px;background:#31c0a5;"></div><div style="position:absolute;left:140px;top:18.4px;width:2px;height:15px;background:#f9ab2d;"></div><div style="position:absolute;left:140px;top:34.3px;width:2px;height:15px;background:#e85d55;"></div><div style="position:absolute;left:140px;top:49.8px;width:2px;height:15px;background:#4fc0dc;"></div><div style="position:absolute;left:140px;top:65.7px;width:2px;height:15px;background:#34475b;"></div><div style="position:absolute;left:0;top:5.200px;width:144px;text-align:center;font-weight:bold;font-size:3.100px;line-height:4px;color:#2c3e50">活动背景</div><div style="position:absolute;left:70.3px;top:11.3px;width:3.6px;height:0.7px;background:#e85d55;"></div><div style="position:absolute;left:25.500px;top:22.300px;font-family:'Liberation Serif','Noto Serif CJK SC',serif;font-size:2.940px;line-height:3.520px;color:#4a4a4a;white-space:nowrap">　　各团支部依托学习强国、青年大学习、腾讯会议等网络平台举行线上<br>主题团日专题学习活动，深入学习习近平总书记关于疫情防控的重要指示<br>精神，了解抗击疫情进展情况，坚定团员青年对党领导全国人民打赢疫情<br>防控阻击战的信心；认真学习权威机构或权威媒体发布的疫情防控科普知<br>识，帮助团员青年正确认识疫情、科学掌握防控要求，稳定情绪增强信心；<br>认真学习了解学校教学管理各项安排，在院系统筹下严格落实疫情防控期<br>间的在线学习，确保学业不受疫情影响；认真学习党、政府和学校关于疫<br>情防控的各项要求，加强自我防护、自我约束，不造谣、不信谣、不传谣，<br>主动为身边亲友和同学做出良好示范，充分展现全校团员青年团结一心、<br>奋力战“疫”的精神风貌。</div></div></div>
<div class="abs" style="left:24.600px;top:426.3px;width:144px;height:60px;border:1px solid #c6c6c6;border-radius:2px;background:#ecf0f1;overflow:hidden;box-shadow:0 0 1px rgba(0,0,0,.2)"><div style="position:absolute;left:-1px;top:-1px;width:144px;height:60px"><div style="position:absolute;left:2.4px;top:2.4px;width:2.4px;height:15px;background:#34475b;"></div><div style="position:absolute;left:2.4px;top:18.4px;width:2.4px;height:15px;background:#4fc0dc;"></div><div style="position:absolute;left:2.4px;top:34.3px;width:2.4px;height:15px;background:#e85d55;"></div><div style="position:absolute;left:139.4px;top:2.4px;width:2.4px;height:15px;background:#31c0a5;"></div><div style="position:absolute;left:139.4px;top:18.4px;width:2.4px;height:15px;background:#f9ab2d;"></div><div style="position:absolute;left:139.4px;top:34.3px;width:2.4px;height:15px;background:#e85d55;"></div><div style="position:absolute;left:0;top:4.500px;width:144px;text-align:center;font-weight:bold;font-size:2.900px;line-height:4px;color:#2c3e50;white-space:nowrap">《关于加强党的领导、全员动员、把党的政治优势组织优势转化为疫情防控强大政治优势的通知》</div><div style="position:absolute;left:70.3px;top:11.3px;width:3.6px;height:0.7px;background:#e85d55;"></div><div style="position:absolute;left:0;top:14.200px;width:144px;text-align:center;font-weight:bold;font-size:2.900px;line-height:4px;color:#222">摘要</div><div style="position:absolute;left:25.500px;top:18.200px;font-family:'Liberation Serif','Noto Serif CJK SC',serif;font-size:2.940px;line-height:3.560px;color:#4a4a4a;white-space:nowrap">　　新型冠状病毒感染的肺炎疫情发生以来，习近平总书记作出一系列重<br>要指示，党中央、国务院作出重大决策。各级党组织和领导班子要增强<br>政治自觉，必须牢记人民利益高于一切，牢记使命在肩不畏艰险冲在一<br>线防控。把疫情防控工作作为当前最重要的工作，亲身参与，深入细致。为<br>坚决打赢疫情防控阻击战提供坚强、有力的政治保证！<br><br>二、要求党员干部、各级党员干部，要加强党的领导发挥党的政治优势作为<br>三、充分发挥广大党员的先锋模范作用党员带头冲在第一线，关心群众生活<br>不断</div></div></div>
</div>
  <div id="canvas" class="abs"></div>
  <div id="slide" class="abs">
    <div class="bar" style="left:0;top:0;background:#34475b"></div>
    <div class="bar" style="left:0;top:92px;background:#4fc0dc"></div>
    <div class="bar" style="left:0;top:184px;background:#e85d55"></div>
    <div class="bar" style="left:0;top:276px;background:#f9ab2d"></div>
    <div class="bar" style="left:0;top:368px;background:#31c0a5"></div>
    <div class="bar" style="right:0;top:0;background:#31c0a5"></div>
    <div class="bar" style="right:0;top:92px;background:#f9ab2d"></div>
    <div class="bar" style="right:0;top:184px;background:#e85d55"></div>
    <div class="bar" style="right:0;top:276px;background:#4fc0dc"></div>
    <div class="bar" style="right:0;top:368px;background:#34475b"></div>
    <div id="stitle" class="abs">活动背景</div>
    <div class="abs" style="left:393.500px;top:53px;width:18px;height:2px;background:#e85d55"></div>
    <div id="body" class="abs">　　各团支部依托学习强国、青年大学习、腾讯会议等网络平台举行线上<br>主题团日专题学习活动，深入学习习近平总书记关于疫情防控的重要指示<br>精神，了解抗击疫情进展情况，坚定团员青年对党领导全国人民打赢疫情<br>防控阻击战的信心；认真学习权威机构或权威媒体发布的疫情防控科普知<br>识，帮助团员青年正确认识疫情、科学掌握防控要求，稳定情绪增强信心；<br>认真学习了解学校教学管理各项安排，在院系统筹下严格落实疫情防控期<br>间的在线学习，确保学业不受疫情影响；认真学习党、政府和学校关于疫<br>情防控的各项要求，加强自我防护、自我约束，不造谣、不信谣、不传谣，<br>主动为身边亲友和同学做出良好示范，充分展现全校团员青年团结一心、<br>奋力战<span style="display:inline-block;width:16.700px;text-align:right;letter-spacing:0;line-height:0;vertical-align:baseline">“</span>疫<span style="display:inline-block;width:16.700px;text-align:left;letter-spacing:0;line-height:0;vertical-align:baseline">”</span>的精神风貌。</div>
  </div>
  <div class="abs" style="left:1035.500px;top:93px;width:11px;height:475px;background:#dddddd"></div>
<svg class="abs" style="left:1038px;top:101px" width="6" height="4" viewBox="0 0 6 4"><path d="M0 4h6L3 0z" fill="#666"/></svg>
<div class="abs" style="left:1035.700px;top:182.300px;width:10.800px;height:30px;background:#f4f4f4;border-radius:5.400px;box-shadow:0 0 1px rgba(0,0,0,.35)"></div>
<svg class="abs" style="left:1038.500px;top:521px" width="5" height="6" viewBox="0 0 5 6"><path d="M0 0h5L2.500 3z" fill="#777"/></svg>
<svg class="abs" style="left:1038.500px;top:536px" width="5" height="6" viewBox="0 0 5 6"><path d="M0 3h5L2.500 0zM0 6h5L2.500 3z" fill="#777"/></svg>
<svg class="abs" style="left:1038.500px;top:551px" width="5" height="6" viewBox="0 0 5 6"><path d="M0 0h5L2.500 3zM0 3h5L2.500 6z" fill="#777"/></svg>
<div class="abs" style="left:205.500px;top:564.500px;width:811px;height:10px;background:#fafafa;border:1px solid #dcdcdc;border-radius:4px 4px 0 0"></div>
<div id="rside" class="abs">
<svg class="abs" style="left:10px;top:8.5px" width="14" height="5" viewBox="0 0 14 5"><path d="M0 1h14M0 4h14" stroke="#c4c4c4" stroke-width="1"/></svg>
<svg class="abs" style="left:9px;top:31.0px" width="16" height="15" viewBox="0 0 16 15"><path d="M8 1.200l1.800 3.700l4 .5l-2.900 2.800l.7 4l-3.600-1.900" stroke="#555" fill="none" stroke-linejoin="round"/><path d="M8 1.200L6.200 4.900l-4 .5l2.300 2.300" stroke="#555" fill="none" stroke-linejoin="round"/><path d="M5.500 9.500l-2 3M3.500 9l-1.800 2.500M7 11l-1.500 2.500" stroke="#555" stroke-width=".8" stroke-dasharray="1.500 1"/></svg>
<div class="rs" style="top:45.7px">动画</div>
<svg class="abs" style="left:9px;top:75.05px" width="16" height="15" viewBox="0 0 16 15"><rect x="2.500" y="1" width="8" height="6.500" rx="1.200" stroke="#555" fill="none"/><rect x="6" y="6.500" width="8.500" height="7" rx="1.200" stroke="#555" fill="#e7e7e7"/><path d="M5.500 12.500h-2.500v-3M1.500 10.800l1.500-1.500l1.500 1.500" stroke="#555" fill="none"/></svg>
<div class="rs" style="top:89.75px">切换</div>
<svg class="abs" style="left:9px;top:119.1px" width="16" height="15" viewBox="0 0 16 15"><path d="M8 1L3 9.300h10zM8 4.600L6 7.600h4z" stroke="#555" stroke-width=".9" fill="none" stroke-linejoin="round"/><path d="M1.500 11.500h13M3.500 13.800h9" stroke="#555" stroke-width=".9"/></svg>
<div class="rs" style="top:133.8px">艺术字</div>
<svg class="abs" style="left:9px;top:163.15px" width="16" height="15" viewBox="0 0 16 15"><rect x="1.500" y="1" width="5" height="5" rx=".4" stroke="#555" fill="none"/><rect x="9.500" y="1" width="5" height="5" rx=".4" stroke="#555" fill="none"/><rect x="1.500" y="9" width="5" height="5" rx=".4" stroke="#555" fill="none"/><rect x="9.500" y="9" width="5" height="5" rx=".4" stroke="#555" fill="#ddd"/><path d="M10 13.500l4-4M10 11l1.500-1.500M12.500 13.500l1.500-1.500" stroke="#555" stroke-width=".7"/></svg>
<div class="rs" style="top:177.85px">颜色</div>
<svg class="abs" style="left:9px;top:207.2px" width="16" height="15" viewBox="0 0 16 15"><path d="M1.500 1v13h13" stroke="#555" fill="none"/><path d="M4.500 13.500v-5h2.500v5M7 13.500v-8h2.500v8M9.500 13.500V3h2.500v10.500" stroke="#555" fill="none"/></svg>
<div class="rs" style="top:221.9px">图表</div>
<svg class="abs" style="left:9px;top:251.25px" width="16" height="15" viewBox="0 0 16 15"><path d="M1.500 3h8M1.500 8h2.500M7.500 8h7M1.500 13h7" stroke="#555"/><circle cx="11.500" cy="3" r="1.700" stroke="#555" fill="none"/><circle cx="5.800" cy="8" r="1.700" stroke="#555" fill="none"/><circle cx="10.500" cy="13" r="1.700" stroke="#555" fill="none"/></svg>
<div class="rs" style="top:265.95px">属性</div>
<svg class="abs" style="left:9px;top:295.3px" width="16" height="15" viewBox="0 0 16 15"><rect x="1.500" y="2" width="13" height="11" rx="1.500" stroke="#555" fill="none"/><path d="M2 11l3.500-3.500l3 3l2-2l3.500 3" stroke="#555" fill="none"/><circle cx="10.500" cy="5.500" r="1" fill="#555"/></svg>
<div class="rs" style="top:310.0px">图库</div>
<svg class="abs" style="left:9px;top:339.35px" width="16" height="15" viewBox="0 0 16 15"><path d="M8 1l5.500 3v7L8 14l-5.500-3V4z" stroke="#555" fill="none" stroke-linejoin="round"/><path d="M8 11V7M8 9.500c-2 0-2.500-1.500-2.500-3c1.500 0 2.500 1 2.500 3zM8 9c0-2 1-3 2.500-3c0 2-1 3-2.500 3z" stroke="#555" stroke-width=".8" fill="none"/></svg>
<div class="rs" style="top:354.05px">风格</div>
<div class="abs" style="left:2px;top:385px;width:31px;height:1px;background:#dedede"></div>
<svg class="abs" style="left:11px;top:411px" width="12" height="3" viewBox="0 0 12 3"><circle cx="1.500" cy="1.500" r="1" fill="#aaa"/><circle cx="6" cy="1.500" r="1" fill="#aaa"/><circle cx="10.500" cy="1.500" r="1" fill="#aaa"/></svg>
<div class="rs" style="top:421px">设置</div>
<div class="abs" style="left:23px;top:192px;width:13px;height:33.500px;background:#8c8c8c"></div>
<svg class="abs" style="left:26px;top:203px" width="6" height="11" viewBox="0 0 6 11"><path d="M1 1l4 4.500L1 10" stroke="#fff" stroke-width="1" fill="none"/></svg>
</div>
</div>
<div id="side" class="abs">
<div class="tile abs" style="top:59px;height:97.2px"><div class="av" style="top:24.5px"><svg width="36" height="36" viewBox="0 0 36 36" style="display:block"><rect width="36" height="36" fill="#dedede"/><path transform="translate(18 20) scale(1.180) translate(-18 -19)" d="M18 6.500c3.800 0 5.800 2.600 5.600 6.200c.8.300.7 1.800-.3 2.800c-.5 2-1.400 3.300-2.300 4.100v1.600c.2 1.500 2.400 2 5.200 3.200c2.300 1 3.200 2.400 3.500 4.600c-3 3.300-7 5-11.700 5s-8.700-1.700-11.700-5c.3-2.200 1.200-3.600 3.500-4.600c2.800-1.200 5-1.700 5.200-3.200v-1.600c-.9-.8-1.800-2.100-2.300-4.100c-1-1-1.100-2.500-.3-2.800c-.2-3.600 1.800-6.200 5.600-6.200z" fill="#c2c2c2"/></svg></div><div class="nb" style="height:18.300px"><svg style="position:absolute;left:5px;top:3.500px" width="12" height="13" viewBox="0 0 12 13"><rect x="4" y="0.800" width="4.400" height="7" rx="2.200" fill="#fff"/><path d="M2.200 5.500v1a4 4 0 0 0 8 0v-1" stroke="#fff" stroke-width="1" fill="none"/><path d="M6.200 10.500v1.800M4 12.300h4.400" stroke="#fff" stroke-width="1"/><path d="M0.500 11.500L11 1" stroke="#e8453c" stroke-width="1.200"/></svg>231173王逸明</div></div>
<div class="tile abs" style="top:156.2px;height:96.8px"><div class="av" style="top:24.6px"><svg width="36" height="36" viewBox="0 0 36 36" style="display:block"><defs><radialGradient id="fw" cx="55%" cy="35%" r="45%"><stop offset="0" stop-color="#c9a38c"/><stop offset=".35" stop-color="#75616a"/><stop offset=".8" stop-color="#2b3152"/><stop offset="1" stop-color="#1d2747"/></radialGradient></defs><rect width="36" height="36" fill="url(#fw)"/><g fill="#f2d9c0"><circle cx="17" cy="8" r=".8"/><circle cx="21" cy="6" r=".7"/><circle cx="24" cy="10" r=".8"/><circle cx="14" cy="12" r=".7"/><circle cx="19" cy="13" r=".9"/><circle cx="26" cy="14" r=".7"/><circle cx="22" cy="16" r=".8"/><circle cx="12" cy="16" r=".6"/><circle cx="28" cy="18" r=".6"/><circle cx="16" cy="18" r=".7"/><circle cx="23" cy="21" r=".6"/><circle cx="29" cy="11" r=".6"/></g><ellipse cx="20" cy="26" rx="4" ry="2.200" fill="#4a4a66"/><rect x="0" y="32.500" width="36" height="3.500" fill="#2a2238"/><rect x="17" y="33" width="2" height="1.500" fill="#a03838"/></svg></div><div class="nb" style="height:18.300px"><svg style="position:absolute;left:5px;top:3.500px" width="12" height="13" viewBox="0 0 12 13"><rect x="4" y="0.800" width="4.400" height="7" rx="2.200" fill="#fff"/><path d="M2.200 5.500v1a4 4 0 0 0 8 0v-1" stroke="#fff" stroke-width="1" fill="none"/><path d="M6.200 10.500v1.800M4 12.300h4.400" stroke="#fff" stroke-width="1"/><path d="M0.500 11.500L11 1" stroke="#e8453c" stroke-width="1.200"/></svg>张旭钊</div></div>
<div class="tile abs" style="top:253.0px;height:96.8px"><div class="av" style="top:24.6px"><svg width="36" height="36" viewBox="0 0 36 36" style="display:block"><rect width="36" height="36" fill="#fcd25f"/><path d="M12 21l-1 6l10 1.500l3-2.500l-1-5z" fill="#fdf3d0" stroke="#d9a84a" stroke-width=".5"/><rect x="11.500" y="10.500" width="11.500" height="9" rx="4" fill="#fff" stroke="#e0b8a8" stroke-width=".5"/><path d="M12.500 11l.5-2l2 1.200M22 11l-.5-2l-2 1.200" fill="#fff" stroke="#e0b8a8" stroke-width=".5"/><ellipse cx="17.200" cy="16" rx="2" ry="1.300" fill="#f5a8a0"/><circle cx="14" cy="14" r=".5" fill="#444"/><circle cx="20.500" cy="14" r=".5" fill="#444"/><path d="M24 12.500l3.500 1.500l-3.500 1.500z" fill="#e8553c"/><path d="M24 12.500v7" stroke="#a07040" stroke-width=".5"/><circle cx="17.500" cy="22.500" r="1" fill="#e8553c"/></svg></div><div class="nb" style="height:18.300px"><svg style="position:absolute;left:5px;top:3.500px" width="12" height="13" viewBox="0 0 12 13"><rect x="4" y="0.800" width="4.400" height="7" rx="2.200" fill="#fff"/><path d="M2.200 5.500v1a4 4 0 0 0 8 0v-1" stroke="#fff" stroke-width="1" fill="none"/><path d="M6.200 10.500v1.800M4 12.300h4.400" stroke="#fff" stroke-width="1"/><path d="M0.500 11.500L11 1" stroke="#e8453c" stroke-width="1.200"/></svg>杨霄</div></div>
<div class="tile abs" style="top:349.8px;height:97.0px"><div class="av" style="top:24.8px"><svg width="36" height="36" viewBox="0 0 36 36" style="display:block"><rect width="36" height="36" fill="#dedede"/><path transform="translate(18 20) scale(1.180) translate(-18 -19)" d="M18 6.500c3.800 0 5.800 2.600 5.600 6.200c.8.300.7 1.800-.3 2.800c-.5 2-1.400 3.300-2.300 4.100v1.600c.2 1.500 2.400 2 5.200 3.200c2.300 1 3.200 2.400 3.500 4.600c-3 3.300-7 5-11.700 5s-8.700-1.700-11.700-5c.3-2.200 1.200-3.600 3.500-4.600c2.800-1.200 5-1.700 5.200-3.200v-1.600c-.9-.8-1.800-2.100-2.300-4.100c-1-1-1.100-2.500-.3-2.800c-.2-3.600 1.800-6.200 5.600-6.200z" fill="#c2c2c2"/></svg></div><div class="nb" style="height:18.300px"><svg style="position:absolute;left:5px;top:3.500px" width="12" height="13" viewBox="0 0 12 13"><rect x="4" y="0.800" width="4.400" height="7" rx="2.200" fill="#fff"/><path d="M2.200 5.500v1a4 4 0 0 0 8 0v-1" stroke="#fff" stroke-width="1" fill="none"/><path d="M6.200 10.500v1.800M4 12.300h4.400" stroke="#fff" stroke-width="1"/><path d="M0.500 11.500L11 1" stroke="#e8453c" stroke-width="1.200"/></svg>吕筑</div></div>
<div class="tile abs" style="top:446.8px;height:97.2px"><div class="av" style="top:25.0px"><svg width="36" height="36" viewBox="0 0 36 36" style="display:block"><defs><linearGradient id="cb" x1="0" y1="0" x2="1" y2="1"><stop offset="0" stop-color="#f4f4f4"/><stop offset="1" stop-color="#d8d8d8"/></linearGradient></defs><rect width="36" height="36" fill="url(#cb)"/><path d="M13 9c1-2 3-3.500 6-3.500c3 0 5 1 6 3c4 2 7 8 7 14c0 3-2 5-4 5h-8c-2 0-3-2-3-5c-2-1-4-3-4.500-6c-1-2-.5-5 .5-7.500z" fill="#8e9298"/><path d="M14 9.500c1.500-1.500 3-2 5-2s3.500.5 4.500 2c.5 2 0 4.500-1.500 6s-4 1.500-5.500.5s-3-4-2.500-6.500z" fill="#a4a8ae"/><path d="M15 13l2.500 4l2.500-4z" fill="#e8e8e8"/><ellipse cx="12" cy="25" rx="6" ry="2" fill="#c8c8c8"/><rect x="19.500" y="23" width="5.500" height="12" rx="1.200" fill="#d8333a"/><path d="M21 25v8M23.500 25v8" stroke="#f08a8a" stroke-width=".6"/></svg></div><div class="nb" style="height:18.300px"><svg style="position:absolute;left:5px;top:3.500px" width="12" height="13" viewBox="0 0 12 13"><rect x="4" y="0.800" width="4.400" height="7" rx="2.200" fill="#fff"/><path d="M2.200 5.500v1a4 4 0 0 0 8 0v-1" stroke="#fff" stroke-width="1" fill="none"/><path d="M6.200 10.500v1.800M4 12.300h4.400" stroke="#fff" stroke-width="1"/><path d="M0.500 11.500L11 1" stroke="#e8453c" stroke-width="1.200"/></svg>巡视员</div></div>
<div class="abs" style="left:44.300px;top:59px;width:91.300px;height:18.300px;background:rgba(0,0,0,.6)"></div>
<svg class="abs" style="left:85px;top:61.800px" width="11" height="7" viewBox="0 0 11 7"><path d="M0.700 6L5.500 1.200L10.300 6" stroke="#fff" stroke-width="1.300" fill="none"/></svg>
<div class="abs" style="left:44.300px;top:521px;width:91.300px;height:22.500px;background:rgba(0,0,0,.62)"></div>
<svg class="abs" style="left:85px;top:530.500px" width="11" height="7" viewBox="0 0 11 7"><path d="M0.700 1L5.500 5.800L10.300 1" stroke="#fff" stroke-width="1.300" fill="none"/></svg>
<div class="abs" style="left:140.300px;top:442.300px;width:40px;height:40px;border-radius:50%;border:2px solid #2f7df0;background:#dcdcdc;overflow:hidden"><svg width="36" height="36" viewBox="0 0 36 36" style="display:block"><path d="M3 36V20a15 14 0 0 1 30 0v16z" fill="#a3a7ab"/><circle cx="13.500" cy="14.500" r="3.200" fill="#f2f2f2"/><circle cx="22.500" cy="14.500" r="3.200" fill="#f2f2f2"/><circle cx="14.300" cy="14.800" r="1.300" fill="#888"/><path d="M21 14.500h3" stroke="#888" stroke-width="1"/><rect x="9" y="20" width="18" height="3.500" rx="1.700" fill="#fff"/><path d="M3 28h30v3H3z" fill="#c9cdd0"/><rect x="15" y="31" width="7" height="5" fill="#f2f2f2"/></svg></div>
</div>
<div id="bottom" class="abs">
<svg class="abs" style="left:391px;top:12.5px" width="19" height="22" viewBox="0 0 19 22"><rect x="6" y="0.300" width="7.500" height="13" rx="3.750" fill="#5f6368"/><path d="M2.800 9v1.500a6.900 6.900 0 0 0 13.800 0V9" stroke="#5f6368" stroke-width="1.600" fill="none"/><path d="M9.700 17.500v3M5 20.700h9.500" stroke="#5f6368" stroke-width="1.600"/><path d="M1.500 19L17.500 2.500" stroke="#f5f5f5" stroke-width="3"/><path d="M1.200 19.300L18 2" stroke="#f0524a" stroke-width="1.300"/></svg>
<div class="bt" style="left:360.5px">解除静音</div>
<svg class="abs" style="left:427.800px;top:21px" width="8" height="5" viewBox="0 0 8 5"><path d="M0 4.500h7.400L3.700 0z" fill="#555"/></svg>
<svg class="abs" style="left:459px;top:14.5px" width="27" height="18" viewBox="0 0 27 18"><rect x="1" y="1.500" width="17" height="14.500" rx="1.500" fill="#5f6368"/><path d="M19.500 7l6-4v11.500l-6-4z" fill="#5f6368"/><path d="M1 16.500L18 0.500" stroke="#f5f5f5" stroke-width="3"/><path d="M0.500 17L18.500 0" stroke="#f0524a" stroke-width="1.300"/></svg>
<div class="bt" style="left:432.5px">开启视频</div>
<svg class="abs" style="left:499.600px;top:21px" width="8" height="5" viewBox="0 0 8 5"><path d="M0 4.500h7.400L3.700 0z" fill="#555"/></svg>
<svg class="abs" style="left:532px;top:13px" width="25" height="21" viewBox="0 0 25 21"><rect x="1.200" y="1.200" width="22.600" height="15.800" rx="1.200" fill="#4f5459" stroke="#2fd16c" stroke-width="1.200"/><path d="M8.500 12c.5-3 2.500-4.500 5.500-4.500V5.500l4 3.500l-4 3.500v-2c-2.200 0-3.800.2-5.500 1.500z" fill="#2fd16c"/><path d="M6.500 19.500h12" stroke="#2fd16c" stroke-width="1.400"/></svg>
<div class="bt" style="left:504.5px">共享屏幕</div>
<svg class="abs" style="left:589px;top:13.5px" width="28" height="21" viewBox="0 0 28 21"><path d="M10.500 0.500c3.200 0 5 2.200 4.800 5.400c.7.300.6 1.600-.2 2.400c-.4 1.700-1.200 2.900-2 3.600v1.400c.2 1.300 2 1.700 4.500 2.800c2 .9 2.800 2 3 3.900H0.400c.2-1.900 1-3 3-3.900c2.500-1.100 4.300-1.500 4.500-2.800v-1.400c-.8-.7-1.600-1.900-2-3.600c-.8-.8-.9-2.100-.2-2.400C5.500 2.700 7.300 0.500 10.500 0.500z" fill="#5f6368"/><circle cx="21.500" cy="14.500" r="6" fill="#fbfbfb"/><circle cx="21.500" cy="14.500" r="5" fill="#5f6368"/><path d="M21.500 11.800v5.400M18.800 14.500h5.400" stroke="#fff" stroke-width="1.500"/></svg>
<div class="bt" style="left:562px">邀请</div>
<svg class="abs" style="left:653px;top:13px" width="28" height="21" viewBox="0 0 28 21"><path d="M17 1c3 0 4.600 2 4.400 5c.6.300.5 1.500-.2 2.200c-.4 1.600-1.100 2.700-1.800 3.300v1.300c.2 1.200 1.800 1.600 4.100 2.600c1.800.8 2.600 2 2.800 4.600H8.700z" fill="#5f6368"/><path d="M10.500 0.500c3.200 0 5 2.200 4.800 5.400c.7.300.6 1.600-.2 2.400c-.4 1.700-1.200 2.900-2 3.600v1.400c.2 1.300 2 1.700 4.500 2.800c2 .9 2.800 2 3 3.900H0.400c.2-1.900 1-3 3-3.900c2.500-1.100 4.300-1.500 4.500-2.800v-1.400c-.8-.7-1.600-1.900-2-3.600c-.8-.8-.9-2.100-.2-2.400C5.500 2.700 7.300 0.500 10.500 0.500z" fill="#5f6368" stroke="#fbfbfb" stroke-width=".8"/></svg>
<div class="bt" style="left:626.5px">成员(31)</div>
<svg class="abs" style="left:725.500px;top:12.5px" width="22" height="22" viewBox="0 0 22 22"><path d="M2 0.500h18a1.500 1.500 0 0 1 1.500 1.500v14a1.500 1.500 0 0 1-1.500 1.500h-1.500l-2.500 4v-4H2a1.500 1.500 0 0 1-1.500-1.500V2A1.500 1.500 0 0 1 2 0.500z" fill="#5f6368"/><circle cx="5.800" cy="9" r="1.500" fill="#fff"/><circle cx="11" cy="9" r="1.500" fill="#fff"/><circle cx="16.200" cy="9" r="1.500" fill="#fff"/></svg>
<div class="bt" style="left:696.5px">聊天</div>
<svg class="abs" style="left:797px;top:12.5px" width="19" height="22" viewBox="0 0 19 22"><path d="M2 0.500h10.500l6 6V20a1.500 1.500 0 0 1-1.500 1.500H2A1.500 1.500 0 0 1 .5 20V2A1.500 1.500 0 0 1 2 0.500z" fill="#5f6368"/><path d="M12.500 0.500v6h6z" fill="#9aa0a6"/><path d="M4.500 11.500h10M4.500 16h10" stroke="#fff" stroke-width="2"/></svg>
<div class="bt" style="left:766.5px">会议文档</div>
<svg class="abs" style="left:857px;top:13.8px" width="21" height="20" viewBox="0 0 21 20"><rect x="0.300" y="0.300" width="8.500" height="8.500" rx="1" fill="#5f6368"/><rect x="11.700" y="0.800" width="7.600" height="7.600" rx="1" fill="#fff" stroke="#8d9196" stroke-width="1"/><rect x="0.300" y="11.200" width="8.500" height="8.500" rx="1" fill="#5f6368"/><rect x="11.200" y="11.200" width="8.500" height="8.500" rx="1" fill="#5f6368"/></svg>
<div class="bt" style="left:827.3px">设置</div>
<div class="abs" style="left:1171.100px;top:13.9px;width:62.800px;height:30.100px;border:1px solid #ff7272;border-radius:3.500px;color:#ff5a5a;font-size:11.500px;line-height:29.800px;text-align:center;background:#fdfdfd">离开会议</div>
<div class="abs" style="left:1258.700px;top:4.8px;width:10px;height:48px;background:#5b6169;border-radius:3px;border-left:1px solid #474c54"></div>
<div class="abs" style="left:1262px;top:9.5px;width:3.300px;height:17.500px;background:repeating-linear-gradient(180deg,#444a52 0,#444a52 1.600px,#5b6169 1.600px,#5b6169 2.400px)"></div>
<div class="abs" style="left:1262px;top:27.8px;width:3.300px;height:20.400px;background:linear-gradient(180deg,#c9c85c,#8cc878 50%,#3cc8aa)"></div>
<div class="abs" style="left:1262px;top:27.8px;width:3.300px;height:20.400px;background:repeating-linear-gradient(180deg,transparent 0,transparent 1.600px,#5b6169 1.600px,#5b6169 2.400px)"></div>
</div>
<div id="taskbar" class="abs">
<svg class="abs" style="left:12.600px;top:9.700px" width="14.500" height="13.500" viewBox="0 0 15 14"><path d="M0 2l6-.9v5.500H0zM7 .9L15 0v6.600H7zM0 7.500h6v5.500l-6-.9zM7 7.500h8V14l-8-1.100z" fill="#fff"/></svg>
<svg class="abs" style="left:52px;top:9.5px" width="15" height="14" viewBox="0 0 15 14"><rect x="2.500" y="3" width="7" height="7.500" stroke="#e8e8e8" stroke-width="1" fill="none"/><path d="M0.500 0.500h11M0.500 13h11M0.500 3v7.500M12.800 3v4" stroke="#e8e8e8" stroke-width="1"/><path d="M12.800 9v2" stroke="#e8e8e8" stroke-width="1.200"/></svg>
<svg class="abs" style="left:93px;top:7.500px" width="17" height="17.500" viewBox="0 0 20.500 21"><path fill-rule="evenodd" d="M1 9.500C1.500 4.500 5.500 1 10.500 1C16 1 19.500 5 19.500 10.500V12.500H7C7.300 15 9.500 16.300 12.300 16.300C14.500 16.300 16.500 15.700 18.300 14.600V18.500C16.500 19.500 14.200 20 11.800 20C6.500 20 2.800 16.800 2.800 11.800C2.800 9 4 6.800 6 5.300C3.500 6 1.800 7.600 1 9.500ZM7.100 8.800H13.600C13.500 6.500 12.300 5.200 10.400 5.200C8.600 5.200 7.400 6.600 7.100 8.800Z" fill="#1f8ae6"/></svg>
<div class="abs" style="left:132.800px;top:6.3px;width:19.800px;height:20px;background:#e25a8e;color:#fff;font-size:6.200px;line-height:21px;text-align:center;font-weight:bold;letter-spacing:-.2px">bilibili</div>
<div class="abs" style="left:173.400px;top:6.3px;width:20px;height:20px;background:#1b86f2;border-radius:4px"></div>
<div class="abs" style="left:175.900px;top:8.8px;width:15px;height:15px;border:1.300px solid #fff;border-radius:50%;color:#fff;font-size:9.500px;font-weight:bold;line-height:12.500px;text-align:center">K</div>
<svg class="abs" style="left:214px;top:6.700px" width="20" height="17" viewBox="0 0 20 17"><path d="M1 1.500l3-1l5.500 12l-2 3.500z" fill="#e8502c"/><path d="M3 3.500l2.500 5.500" stroke="#f0a030" stroke-width="1.500"/><path d="M19.500 0.500l-3.500 .5L8.500 13l1.500 3.500z" fill="#63b12f"/></svg>
<div class="abs" style="left:255.700px;top:6.5px;width:18.500px;height:18.500px;background:#0b1c30;border:1.500px solid #30c4f0;color:#30c4f0;font-size:10px;font-weight:bold;line-height:15px;text-align:center">Ps</div>
<svg class="abs" style="left:296.500px;top:8px" width="20" height="16" viewBox="0 0 20 16"><path d="M0.500 1.500h7l1.500 2h10.500v12H0.500z" fill="#f2b731"/><path d="M0.500 5h19v10.500H0.500z" fill="#fbd15b"/><path d="M5 9.500h10v6h-3v-3H8v3H5z" fill="#3f8fe0"/></svg>
<svg class="abs" style="left:337px;top:6.5px" width="21" height="19" viewBox="0 0 21 19"><path d="M15 0.500l5.500 2.500v13L15 18.500L4.500 9.500z" fill="#8f60dc"/><path d="M15 5.500v8L9.500 9.500z" fill="#2b2236"/><path d="M0.500 5.500l2-1.500l7 5.500l-7 5.500l-2-1.500l4.500-4z" fill="#a77ae8"/></svg>
<svg class="abs" style="left:377.500px;top:7px" width="21" height="18" viewBox="0 0 21 18"><rect x="6" y="0.500" width="14.500" height="17" rx="1" fill="#2b7cd3"/><rect x="6" y="0.500" width="14.500" height="4.300" fill="#41a5ee"/><rect x="6" y="9" width="14.500" height="4.300" fill="#185abd"/><rect x="6" y="13.300" width="14.500" height="4.200" rx="1" fill="#103f91"/><rect x="0.500" y="4" width="11" height="10.500" rx="1" fill="#185abd"/><text x="6" y="12.300" font-size="7.500" font-weight="bold" fill="#fff" text-anchor="middle" font-family="Liberation Sans,sans-serif">W</text></svg>
<div class="abs" style="left:418.500px;top:6.5px;width:20.200px;height:20.200px;border-radius:50%;background:#f3e6e4;overflow:hidden"><svg width="20.200" height="20.200" viewBox="0 0 20 20" style="display:block"><rect width="20" height="20" fill="#f1e4e2"/><path d="M2 13c-1-7 3-11 8.500-11s9 4.500 7.500 11.500c-1.500 1-2-2-2.500-4c-2 0-6-.5-8.500-3c-.5 2.500-2 5-3 7.500z" fill="#e8a9b2"/><ellipse cx="10.500" cy="12.500" rx="4.500" ry="4.800" fill="#fbeee6"/><path d="M5 8c2-3 8-4 11 0c-3-.5-4-1.500-5-2.500c-1.500 1.500-3.500 2.300-6 2.500z" fill="#e39aa6"/><circle cx="8.700" cy="12.500" r=".7" fill="#8a5a6a"/><circle cx="12.500" cy="12.500" r=".7" fill="#8a5a6a"/><path d="M5 20c1-3 3.500-3.500 5.500-3.500s4.500.5 5.500 3.500z" fill="#d9d9e2"/></svg></div>
<div class="abs" style="left:412.500px;top:31px;width:33.500px;height:2px;background:#a29eae"></div>
<div class="abs" style="left:450px;top:0;width:40px;height:33px;background:#443c4e"></div>
<div class="abs" style="left:450px;top:31px;width:40px;height:2px;background:#b5b1c0"></div>
<svg class="abs" style="left:459.500px;top:6.5px" width="20.500" height="20" viewBox="0 0 20 20"><rect width="20" height="20" fill="#1a6ef5"/><path d="M2.500 13.500c0-2.500 3-6.500 5-6.500c1.500 0 2 1.800 2.800 3c.8-1.600 1.800-3 3.200-3c2 0 4.200 4 4.200 6.500c0 .8-1 .8-1.500 0c-.8-1.400-1.700-2.500-2.700-2.500s-1.800 1.300-2.500 2.500c-.4.700-1 .7-1.400 0C8.800 12.300 8 11 7 11s-2 1.100-2.800 2.500c-.5.800-1.700.8-1.700 0z" fill="#fff"/></svg>
<div class="abs" style="left:495px;top:31px;width:33px;height:2px;background:#a29eae"></div>
<svg class="abs" style="left:500.800px;top:6.5px" width="20" height="20" viewBox="0 0 20 20"><rect width="20" height="20" rx="3" fill="#1fb27c"/><path d="M5 11c3-1 5-4 5-7c0-1.200-1.300-1.200-1.300 0c0 3 3 6 6 6.500c1 .1 1-1 0-1c-3.500-.3-7.500.5-9.700 1.500z" stroke="#fff" stroke-width=".9" fill="none"/><text x="10" y="17" font-size="5" fill="#fff" text-anchor="middle" font-family="Liberation Sans,sans-serif">PDF</text></svg>
<svg class="abs" style="left:1019px;top:13px" width="12" height="8" viewBox="0 0 12 8"><path d="M0.700 7L6 1.500L11.300 7" stroke="#fff" stroke-width="1.200" fill="none"/></svg>
<svg class="abs" style="left:1039.500px;top:10.5px" width="12" height="12" viewBox="0 0 12 12"><path d="M1 11A10 10 0 0 1 11 1M3.500 11A7.500 7.500 0 0 1 11 3.500M6 11A5 5 0 0 1 11 6" stroke="#b8b4c0" stroke-width="1" fill="none"/><circle cx="10" cy="10.500" r="1.200" fill="#e8e8e8"/></svg>
<svg class="abs" style="left:1057px;top:11px" width="15" height="12" viewBox="0 0 15 12"><path d="M0.500 4h2.500l3-3v10l-3-3H0.500z" stroke="#e8e8e8" stroke-width="1" fill="none"/><path d="M8 4a3 3 0 0 1 0 4M10 2.500a5.500 5.500 0 0 1 0 7" stroke="#d0d0d0" stroke-width=".9" fill="none"/><path d="M12 1a8 8 0 0 1 0 10" stroke="#8a8694" stroke-width=".9" fill="none"/></svg>
<svg class="abs" style="left:1078.500px;top:10.5px" width="11" height="13" viewBox="0 0 11 13"><ellipse cx="5.500" cy="6.500" rx="4.500" ry="5.500" fill="#111"/><ellipse cx="5.500" cy="8.500" rx="2.800" ry="3.200" fill="#fff"/><path d="M1.500 6.500c2.500 1.200 5.500 1.200 8 0l-.3 1.600c-2.500 1-5 1-7.400 0z" fill="#e8312a"/><ellipse cx="3.300" cy="12" rx="2" ry=".9" fill="#f5a623"/><ellipse cx="7.700" cy="12" rx="2" ry=".9" fill="#f5a623"/><circle cx="4.200" cy="3.500" r=".8" fill="#fff"/><circle cx="6.800" cy="3.500" r=".8" fill="#fff"/><ellipse cx="5.500" cy="5.200" rx="1.500" ry=".5" fill="#f5a623"/></svg>
<svg class="abs" style="left:1097px;top:11.5px" width="15" height="10" viewBox="0 0 15 10"><rect x="2.500" y="2.500" width="11" height="6.500" rx=".8" fill="#dcdcdc" stroke="#fff" stroke-width="1"/><path d="M14 4.500v2.500" stroke="#fff" stroke-width="1"/><path d="M0.500 2h3.500M2 0.500v3" stroke="#fff" stroke-width=".9"/></svg>
<div class="abs" style="left:1118px;top:9.5px;color:#fff;font-size:10.600px;line-height:14px">中</div>
<div class="abs" style="left:1140.400px;top:10.400px;width:13px;height:12.400px;background:#fff;border-radius:2.500px"></div><svg class="abs" style="left:1142px;top:12px" width="10" height="9.500" viewBox="0 0 10 9.500"><circle cx="4.300" cy="4.300" r="3.200" stroke="#111" stroke-width="1.500" fill="none"/><path d="M5.800 6l2 2" stroke="#111" stroke-width="1.400"/><circle cx="8.800" cy="8.300" r=".7" fill="#111"/></svg>
<div class="abs" style="left:1162px;top:2.5px;width:61px;text-align:center;color:#fff;font-size:10px;line-height:14px">15:31</div>
<div class="abs" style="left:1162px;top:16.8px;width:61px;text-align:center;color:#fff;font-size:10.900px;line-height:14px">2020/3/12</div>
<svg class="abs" style="left:1232.500px;top:10px" width="15" height="13" viewBox="0 0 15 13"><path d="M0.500 0.500h13.500v9.500H5l-3 2.500v-2.500H0.500z" fill="#f2f2f2"/><path d="M3 3h8.500M3 5.200h8.500M3 7.400h8.500" stroke="#3a3040" stroke-width=".8"/></svg>
<div class="abs" style="left:1240px;top:16.5px;width:12px;height:12px;border-radius:50%;background:#2a2432;border:1px solid #777;color:#fff;font-size:9px;font-weight:bold;line-height:10px;text-align:center">3</div>
<div class="abs" style="left:1263px;top:0;width:1px;height:33px;background:#5c5464"></div>
</div>
</div>
</body>
</html>
